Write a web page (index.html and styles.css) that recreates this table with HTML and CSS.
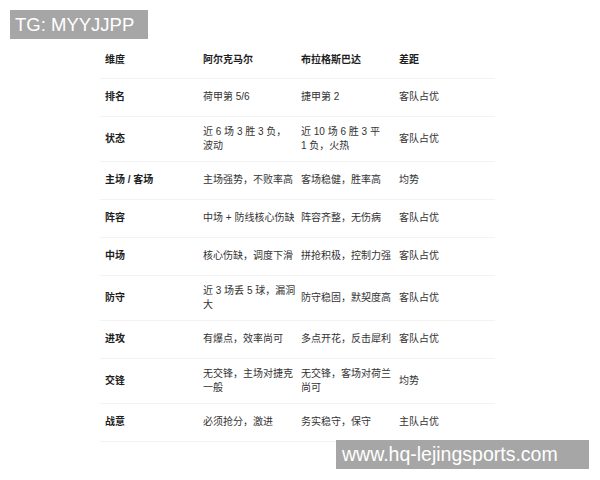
FILE: index.html
```html
<!DOCTYPE html>
<html lang="zh">
<head>
<meta charset="utf-8">
<link rel="stylesheet" href="styles.css">
</head>
<body>
<div class="page">
  <table class="cmp">
    <colgroup>
      <col class="c1"><col class="c2"><col class="c3"><col class="c4">
    </colgroup>
    <thead>
      <tr class="head"><th>维度</th><th>阿尔克马尔</th><th>布拉格斯巴达</th><th>差距</th></tr>
    </thead>
    <tbody>
      <tr><th>排名</th><td>荷甲第 5/6</td><td>捷甲第 2</td><td>客队占优</td></tr>
      <tr><th>状态</th><td>近 6 场 3 胜 3 负，<br>波动</td><td>近 10 场 6 胜 3 平<br>1 负，火热</td><td>客队占优</td></tr>
      <tr><th>主场 / 客场</th><td>主场强势，不败率高</td><td>客场稳健，胜率高</td><td>均势</td></tr>
      <tr><th>阵容</th><td>中场 + 防线核心伤缺</td><td>阵容齐整，无伤病</td><td>客队占优</td></tr>
      <tr><th>中场</th><td>核心伤缺，调度下滑</td><td>拼抢积极，控制力强</td><td>客队占优</td></tr>
      <tr><th>防守</th><td>近 3 场丢 5 球，漏洞<br>大</td><td>防守稳固，默契度高</td><td>客队占优</td></tr>
      <tr><th>进攻</th><td>有爆点，效率尚可</td><td>多点开花，反击犀利</td><td>客队占优</td></tr>
      <tr><th>交锋</th><td>无交锋，主场对捷克<br>一般</td><td>无交锋，客场对荷兰<br>尚可</td><td>均势</td></tr>
      <tr><th>战意</th><td>必须抢分，激进</td><td>务实稳守，保守</td><td>主队占优</td></tr>
    </tbody>
  </table>
</div>
<div class="wm wm-top">TG: MYYJJPP</div>
<div class="wm wm-bottom">www.hq-lejingsports.com</div>
</body>
</html>
```
FILE: styles.css
```css
html, body {
  margin: 0;
  background: #ffffff;
}
body {
  font-family: "Liberation Sans", "Noto Sans CJK SC", sans-serif;
}
.page {
  padding: 42px 0 0 100px;
}
.cmp {
  border-collapse: collapse;
  table-layout: fixed;
  width: 395px;
  font-size: 10px;
  line-height: 14px;
  color: #333333;
}
.c1, .c2, .c3 { width: 98px; }
.c4 { width: 101px; }
.cmp th, .cmp td {
  padding: 8px 0 8px 5px;
  text-align: left;
  vertical-align: middle;
  border-bottom: 1px solid #f3f3f3;
  font-weight: normal;
  white-space: nowrap;
}
.cmp tr { height: 38px; }
.cmp tr.head { height: 36px; }
.cmp tr.head th,
.cmp tbody th {
  font-weight: bold;
  color: #1e1e1e;
}
.wm {
  position: absolute;
  background: #a6a6a6;
  color: #ffffff;
  font-family: "Liberation Sans", Arial, sans-serif;
  height: 29px;
  line-height: 29px;
  box-sizing: border-box;
  white-space: nowrap;
}
.wm-top {
  left: 10px;
  top: 10px;
  width: 138px;
  padding-left: 5px;
  font-size: 18.5px;
}
.wm-bottom {
  left: 336px;
  top: 440px;
  width: 253px;
  padding-left: 6px;
  font-size: 19.5px;
}
```
